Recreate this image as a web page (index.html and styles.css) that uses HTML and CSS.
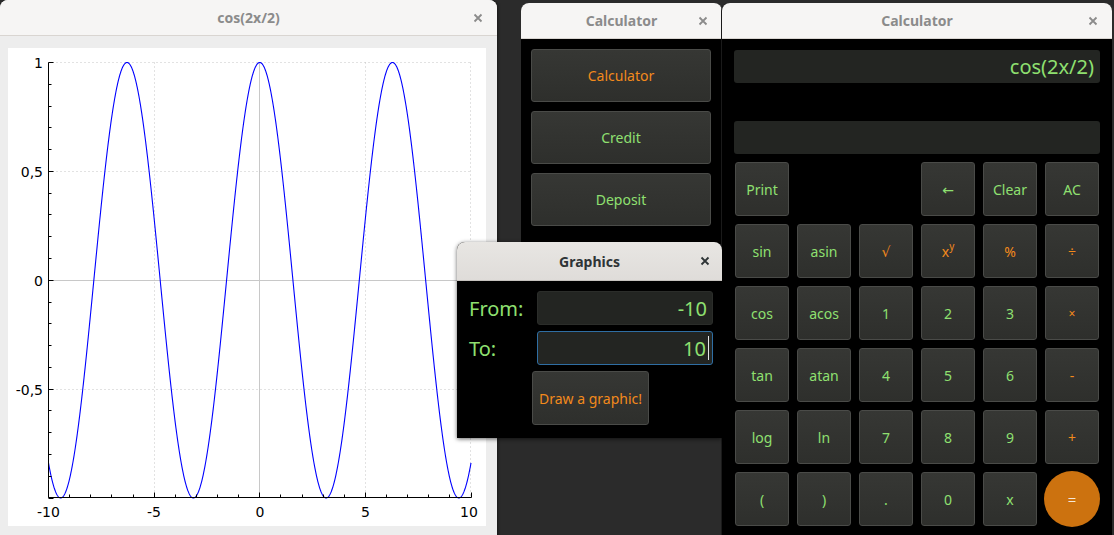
FILE: index.html
```html
<!DOCTYPE html>
<html lang="en">
<head>
<meta charset="utf-8">
<title>Calculator</title>
<link rel="stylesheet" href="styles.css">
</head>
<body>
<div class="desktop">

  <section class="win plot-win">
    <header class="titlebar">
      <span class="title">cos(2x/2)</span>
      <span class="close"><svg viewBox="0 0 10 10" width="10" height="10"><path d="M1.5 1.5L8.5 8.5M8.5 1.5L1.5 8.5"/></svg></span>
    </header>
    <div class="plot-body">
      <div class="plot-area">
        <svg class="plot-svg" width="478" height="478" viewBox="0 0 478 478">
          <g class="grid-dot">
            <path d="M40.5 14.5H463M40.5 123.5H463M40.5 341.5H463M146.5 14.5V450M357.5 14.5V450M462.5 14.5V450"/>
          </g>
          <g class="grid-solid">
            <path d="M40.5 232.5H463M251.5 14.5V450"/>
          </g>
          <path class="curve" id="curve" d=""/>
          <g class="axis">
            <path d="M40.5 14.5V449.5H463.5"/>
            <path id="ticks" d=""/>
          </g>
          <g class="ylab">
            <text x="35" y="19.5">1</text>
            <text x="35" y="128.5">0,5</text>
            <text x="35" y="237.5">0</text>
            <text x="35" y="346.5">-0,5</text>
          </g>
          <g class="xlab">
            <text x="40.5" y="468.5">-10</text>
            <text x="146" y="468.5">-5</text>
            <text x="252" y="468.5">0</text>
            <text x="357.5" y="468.5">5</text>
            <text x="461" y="468.5">10</text>
          </g>
        </svg>
      </div>
    </div>
  </section>

  <section class="win menu-win">
    <header class="titlebar">
      <span class="title">Calculator</span>
      <span class="close"><svg viewBox="0 0 10 10" width="10" height="10"><path d="M1.5 1.5L8.5 8.5M8.5 1.5L1.5 8.5"/></svg></span>
    </header>
    <div class="menu-body">
      <div class="btn menu-btn orange">Calculator</div>
      <div class="btn menu-btn">Credit</div>
      <div class="btn menu-btn">Deposit</div>
    </div>
  </section>

  <section class="win calc-win">
    <header class="titlebar">
      <span class="title">Calculator</span>
      <span class="close"><svg viewBox="0 0 10 10" width="10" height="10"><path d="M1.5 1.5L8.5 8.5M8.5 1.5L1.5 8.5"/></svg></span>
    </header>
    <div class="calc-body">
      <div class="display main-display">cos(2x/2)</div>
      <div class="display second-display"></div>
      <div class="keys">
        <div class="btn key">Print</div>
        <div class="key-gap"></div>
        <div class="key-gap"></div>
        <div class="btn key">&#8592;</div>
        <div class="btn key">Clear</div>
        <div class="btn key">AC</div>

        <div class="btn key">sin</div>
        <div class="btn key">asin</div>
        <div class="btn key orange">&#8730;</div>
        <div class="btn key orange">x<sup>y</sup></div>
        <div class="btn key orange">%</div>
        <div class="btn key orange">&#247;</div>

        <div class="btn key">cos</div>
        <div class="btn key">acos</div>
        <div class="btn key">1</div>
        <div class="btn key">2</div>
        <div class="btn key">3</div>
        <div class="btn key orange small">&#215;</div>

        <div class="btn key">tan</div>
        <div class="btn key">atan</div>
        <div class="btn key">4</div>
        <div class="btn key">5</div>
        <div class="btn key">6</div>
        <div class="btn key orange">-</div>

        <div class="btn key">log</div>
        <div class="btn key">ln</div>
        <div class="btn key">7</div>
        <div class="btn key">8</div>
        <div class="btn key">9</div>
        <div class="btn key orange">+</div>

        <div class="btn key">(</div>
        <div class="btn key">)</div>
        <div class="btn key">.</div>
        <div class="btn key">0</div>
        <div class="btn key">x</div>
        <div class="key equals">=</div>
      </div>
    </div>
  </section>

  <section class="win dialog">
    <header class="titlebar active">
      <span class="title">Graphics</span>
      <span class="close"><svg viewBox="0 0 10 10" width="10" height="10"><path d="M1.5 1.5L8.5 8.5M8.5 1.5L1.5 8.5"/></svg></span>
    </header>
    <div class="dialog-body">
      <div class="form">
        <label class="lbl">From:</label>
        <div class="field">-10</div>
        <label class="lbl">To:</label>
        <div class="field focused">10<span class="caret"></span></div>
      </div>
      <div class="btn draw-btn orange">Draw a graphic!</div>
    </div>
  </section>

</div>
<script src="script.js"></script>
</body>
</html>
```

FILE: styles.css
```css
* { box-sizing: border-box; margin: 0; padding: 0; }

html, body {
  width: 1114px;
  height: 535px;
  overflow: hidden;
  background: #2b2b2b;
  font-family: "Noto Sans", "DejaVu Sans", sans-serif;
}

.desktop {
  position: relative;
  width: 1114px;
  height: 535px;
  overflow: hidden;
  background: #2b2b2b;
}

/* windows on the desktop */
.win {
  position: absolute;
  display: flex;
  flex-direction: column;
  border-radius: 8px 8px 0 0;
  overflow: hidden;
}

.titlebar {
  flex: none;
  position: relative;
  height: 36px;
  display: flex;
  align-items: center;
  justify-content: center;
  background: #f6f5f4;
  border-bottom: 1px solid #d9d5d1;
  color: #8b8b8b;
  font-size: 14px;
  font-weight: bold;
}

.titlebar.active {
  background: linear-gradient(#e8e6e3, #dfdcd9);
  border-bottom-color: #c6c2be;
  color: #2e3436;
}

.close {
  position: absolute;
  right: 14px;
  top: 50%;
  width: 10px;
  height: 10px;
  margin-top: -5px;
  display: flex;
}

.close svg path {
  stroke: #8b8b8b;
  stroke-width: 1.8;
  fill: none;
}

.titlebar.active .close svg path { stroke: #2e3436; }

/* plot window */
.plot-win {
  left: 0;
  top: 0;
  width: 497px;
  height: 545px;
  background: #ededed;
  box-shadow: 1px 0 3px rgba(0,0,0,0.5);
}

.plot-body {
  flex: 1;
  background: #ededed;
  padding: 12px 11px 0 8px;
}

.plot-area {
  width: 478px;
  height: 478px;
  background: #fff;
}

.plot-svg { display: block; }

.grid-dot path {
  stroke: #c4c4c4;
  stroke-width: 1;
  stroke-dasharray: 1 3;
  fill: none;
}

.grid-solid path {
  stroke: #c8c8c8;
  stroke-width: 1;
  fill: none;
}

.axis path {
  stroke: #000;
  stroke-width: 1;
  fill: none;
}

.curve {
  stroke: #0000ff;
  stroke-width: 1.1;
  fill: none;
}

.ylab text, .xlab text {
  font-family: "DejaVu Sans", sans-serif;
  font-size: 14px;
  fill: #000;
}

.ylab text { text-anchor: end; }
.xlab text { text-anchor: middle; }

/* small calculator menu window */
.menu-win {
  left: 521px;
  top: 3px;
  width: 201px;
  height: 435px;
  background: #000;
}

.menu-body {
  flex: 1;
  background: #000;
  padding: 10px 11px 0 10px;
  display: flex;
  flex-direction: column;
  gap: 9px;
}

.btn {
  display: flex;
  align-items: center;
  justify-content: center;
  background: linear-gradient(#363734, #2e2f2c);
  border: 1px solid #4a4b48;
  border-radius: 3px;
  color: #8fe070;
  font-size: 14px;
}

.btn.orange { color: #f38a1c; }

.menu-btn { height: 53px; }

/* main calculator */
.calc-win {
  left: 722px;
  top: 3px;
  width: 390px;
  height: 540px;
  background: #000;
  box-shadow: -1px 0 0 #1a1a1a;
}

.calc-body {
  flex: 1;
  background: #000;
  padding: 11px 12px 0 12px;
  display: flex;
  flex-direction: column;
}

.display {
  height: 33px;
  width: 366px;
  background: #232522;
  border-radius: 3px;
  color: #8fe070;
  font-size: 20px;
  display: flex;
  align-items: center;
  justify-content: flex-end;
  padding-right: 6px;
}

.second-display { margin-top: 38px; }

.keys {
  margin-top: 8px;
  margin-left: 1px;
  display: grid;
  grid-template-columns: repeat(6, 54px);
  grid-auto-rows: 54px;
  gap: 8px;
}

.key sup {
  font-size: 10px;
  vertical-align: 0;
  position: relative;
  top: -5px;
}

.key.small { font-size: 12px; }

.equals {
  margin: -1px;
  border-radius: 50%;
  background: #cc720f;
  color: #f4e8da;
  font-size: 15px;
  display: flex;
  align-items: center;
  justify-content: center;
}

/* graphics dialog */
.dialog {
  left: 457px;
  top: 242px;
  width: 265px;
  height: 196px;
  background: #000;
  box-shadow: 0 1px 4px rgba(0,0,0,0.6);
}

.dialog .titlebar { height: 39px; }
.dialog .close { right: 12px; }

.dialog-body {
  flex: 1;
  background: #000;
  padding: 10px 9px 0 12px;
}

.form {
  display: grid;
  grid-template-columns: 68px 176px;
  grid-auto-rows: 34px;
  row-gap: 6px;
  align-items: center;
}

.lbl {
  color: #8fe070;
  font-size: 20px;
}

.field {
  height: 34px;
  background: #232522;
  border: 1px solid #2b2d2a;
  border-radius: 3px;
  color: #8fe070;
  font-size: 20px;
  display: flex;
  align-items: center;
  justify-content: flex-end;
  padding-right: 5px;
}

.field.focused {
  border-color: #2f6ea3;
  padding-right: 3px;
}

.caret {
  width: 1px;
  height: 24px;
  background: #e6e6e6;
  margin-left: 2px;
}

.draw-btn {
  margin-top: 6px;
  margin-left: 63px;
  width: 117px;
  height: 54px;
  font-size: 14px;
}
```

FILE: script.js
```js
(function () {
  var X = function (v) { return 40.5 + (v + 10) * 21.125; };
  var Y = function (v) { return 14.5 + (1 - v) * 217.75; };

  var d = '';
  var n = 1200;
  for (var i = 0; i <= n; i++) {
    var x = -10 + 20 * i / n;
    d += (i ? 'L' : 'M') + X(x).toFixed(2) + ' ' + Y(Math.cos(x)).toFixed(2);
  }
  document.getElementById('curve').setAttribute('d', d);

  var t = '';
  for (var j = 0; j <= 20; j++) {
    var yv = -1 + j * 0.1;
    var yy = Math.floor(Y(yv)) + 0.5;
    t += 'M40.5 ' + yy + 'h' + (j % 5 === 0 ? 5 : 3);
  }
  for (var k = 0; k <= 20; k++) {
    var xx = Math.floor(X(-10 + k)) + 0.5;
    t += 'M' + xx + ' 449.5v-' + (k % 5 === 0 ? 5 : 3);
  }
  document.getElementById('ticks').setAttribute('d', t);
})();
```
